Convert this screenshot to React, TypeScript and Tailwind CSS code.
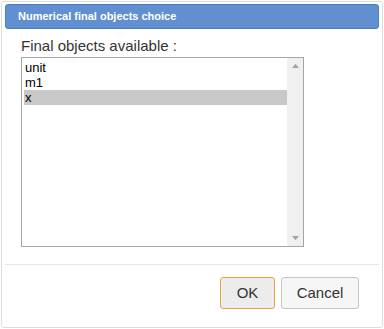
import React, { useState } from "react";

const items = ["unit", "m1", "x"];

export default function App() {
  const [selected, setSelected] = useState(2);

  return (
    <div
      className="w-[384px] h-[329px] bg-white overflow-hidden"
      style={{ fontFamily: '"Liberation Sans", Arial, sans-serif' }}
    >
      <div className="mx-[1px] mt-[1px] h-[327px] border border-[#dddddd] rounded-[3px] bg-white px-[3px] pt-[2px] flex flex-col">
        <div className="h-[25px] rounded-[3px] border border-[#4a7cc4] bg-[#628fcf] flex items-center pl-[12px]">
          <span className="text-[11px] font-bold text-white">Numerical final objects choice</span>
        </div>
        <div className="pl-[16px] pt-[8px]">
          <div className="text-[15px] leading-[17px] text-[#333333]">Final objects available :</div>
          <div className="mt-[3px] w-[283px] h-[190px] border border-[#a5a5a5] flex bg-white">
            <div className="flex-1 flex flex-col pt-[2px] pl-[2px]">
              {items.map((it, i) => (
                <div
                  key={it}
                  onClick={() => setSelected(i)}
                  className={
                    "h-[15px] text-[13px] leading-[15px] text-black pl-[1px] " +
                    (i === selected ? "bg-[#c8c8c8]" : "")
                  }
                >
                  {it}
                </div>
              ))}
            </div>
            <div className="w-[16px] bg-[#f0f0f0] flex flex-col justify-between items-center py-[6px]">
              <svg width="7" height="4" viewBox="0 0 7 4">
                <path d="M0 4 L3.5 0 L7 4 Z" fill="#a3a3a3" />
              </svg>
              <svg width="7" height="4" viewBox="0 0 7 4">
                <path d="M0 0 L3.5 4 L7 0 Z" fill="#a3a3a3" />
              </svg>
            </div>
          </div>
        </div>
        <div className="mt-[17px] border-t border-[#e5e5e5]" />
        <div className="flex justify-end gap-[6px] pt-[12px] pr-[20px]">
          <button className="w-[55px] h-[32px] rounded-[3px] border border-[#e8a43a] bg-[#ececec] text-[15px] text-[#333333]">
            OK
          </button>
          <button className="w-[78px] h-[32px] rounded-[3px] border border-[#c5c5c5] bg-[#f6f6f6] text-[15px] text-[#333333]">
            Cancel
          </button>
        </div>
      </div>
    </div>
  );
}
